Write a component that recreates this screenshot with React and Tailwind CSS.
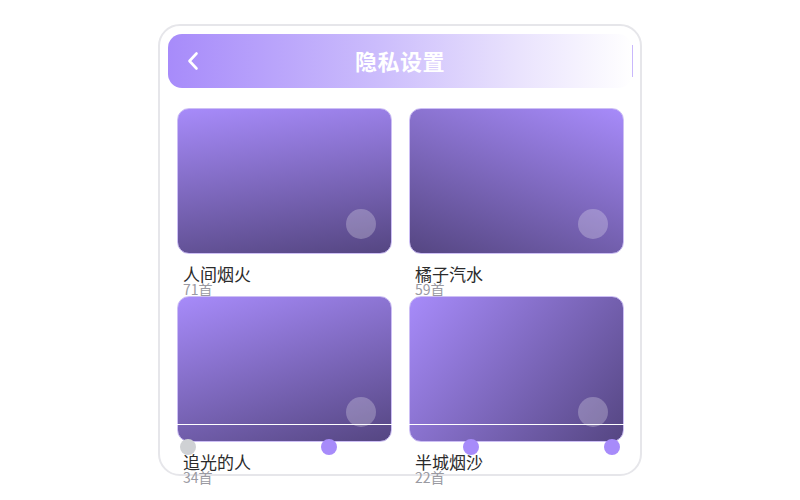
import React from "react";

const cards = [
  { title: "人间烟火", count: "71首", grad: "bg-[linear-gradient(172deg,#a78bfa_0%,#554682_100%)]" },
  { title: "橘子汽水", count: "59首", grad: "bg-[linear-gradient(200deg,#a78bfa_0%,#554682_100%)]" },
  { title: "追光的人", count: "34首", grad: "bg-[linear-gradient(162deg,#a78bfa_0%,#554682_100%)]" },
  { title: "半城烟沙", count: "22首", grad: "bg-[linear-gradient(130deg,#a78bfa_0%,#554682_100%)]" },
];

export default function App() {
  return (
    <div className="w-[800px] h-[500px] bg-white flex justify-center pt-[24px] font-['Noto_Sans_CJK_SC','Noto_Sans',sans-serif]">
      <div className="relative w-[484px] h-[452px] rounded-[22px] border-2 border-[#e6e6ea] px-[8px] pt-[8px]">
        <div className="relative h-[54px] rounded-[14px] bg-[linear-gradient(90deg,#a78bfa_0%,#cbbcfc_45%,#e9e2fd_75%,#ffffff_100%)] flex items-center justify-center">
          <svg className="absolute left-[18px] top-[17px]" width="14" height="20" viewBox="0 0 14 20" fill="none">
            <path d="M10.5 2.5 L3.5 10 L10.5 17.5" stroke="white" strokeWidth="2.6" strokeLinecap="round" strokeLinejoin="round" />
          </svg>
          <span className="text-white text-[22px] font-bold leading-none tracking-[0.5px] -mt-[3px]">隐私设置</span>
          <div className="absolute right-[-1px] top-[11px] w-px h-[32px] bg-[#c9b8fc]" />
        </div>
        <div className="grid grid-cols-2 gap-x-[17px] pl-[9px] pr-[8px] pt-[20px]">
          {cards.map((c, i) => (
            <div key={i} className="flex flex-col h-[188px]">
              <div className={`relative h-[146px] rounded-[12px] border border-[#cdbff5] ${c.grad}`}>
                <div className="absolute right-[15px] bottom-[14px] w-[30px] h-[30px] rounded-full bg-white/25" />
              </div>
              <div className="pl-[6px] pt-[11px] flex flex-col">
                <span className="text-[17px] leading-[17px] text-[#2b2b2b]">{c.title}</span>
                <span className="text-[14px] leading-[14px] text-[#9a9aa2]">{c.count}</span>
              </div>
            </div>
          ))}
        </div>
        <div className="absolute left-0 right-[9px] top-[398px] h-px bg-white" />
        <div className="absolute left-[20px] right-[20px] top-[413px] flex justify-between">
          <div className="w-[16px] h-[16px] rounded-full bg-[#cfd1d4]" />
          <div className="w-[16px] h-[16px] rounded-full bg-[#a78bfa]" />
          <div className="w-[16px] h-[16px] rounded-full bg-[#a78bfa]" />
          <div className="w-[16px] h-[16px] rounded-full bg-[#a78bfa]" />
        </div>
      </div>
    </div>
  );
}
